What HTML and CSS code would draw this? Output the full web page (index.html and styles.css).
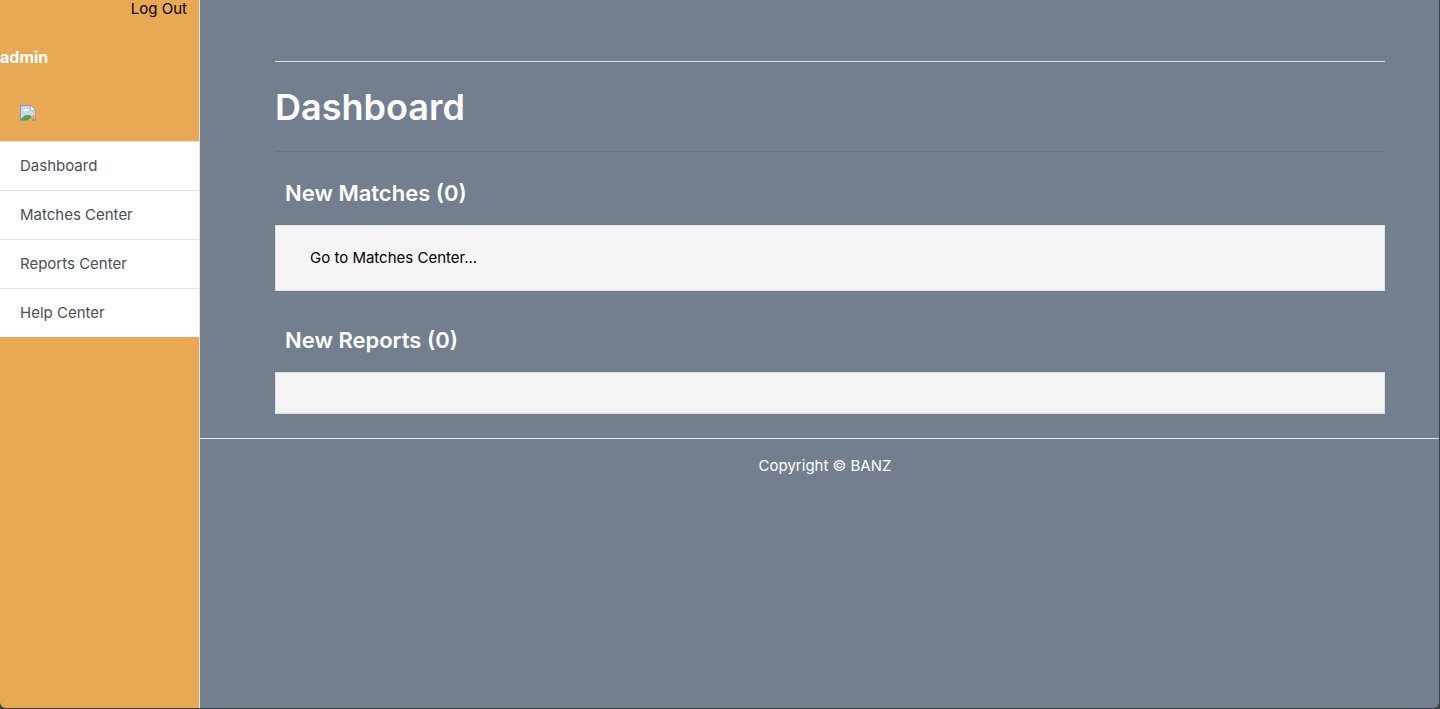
FILE: index.html
```html
<!DOCTYPE html>
<html lang="en">
<head>
<meta charset="utf-8">
<title>Dashboard</title>
<link rel="stylesheet" href="styles.css">
</head>
<body>
<div class="shell">
  <aside class="sidebar">
    <a class="logout" href="#">Log Out</a>
    <p class="user">admin</p>
    <div class="avatar">
      <svg width="16" height="16" viewBox="0 0 16 16" role="img" aria-label="Profile picture">
        <path d="M0 0h11l5 5v11H0z" fill="#96999c"/>
        <path d="M1 1h9.500v4.500H15V15H1z" fill="#c3d8f4"/>
        <path d="M11 1v4h4z" fill="#f4f4f4"/>
        <path d="M3 6c0-1 1-1.500 1.700-1.300C5.200 3 7.500 3.200 7.700 4.800 9 4.800 9 6 8.500 6z" fill="#fff"/>
        <path d="M1 15v-1C3 12 4.500 10 7.500 10s5 2 7.500 5z" fill="#58a044"/>
        <path d="M16 8v3.500L11.500 16H7z" fill="#e8a854"/>
      </svg>
    </div>
    <nav class="menu">
      <a href="#">Dashboard</a>
      <a href="#">Matches Center</a>
      <a href="#">Reports Center</a>
      <a href="#">Help Center</a>
    </nav>
  </aside>
  <div class="page">
    <main class="content">
      <h1>Dashboard</h1>
      <section>
        <h2>New Matches (0)</h2>
        <div class="panel"><a href="#">Go to Matches Center...</a></div>
      </section>
      <section>
        <h2>New Reports (0)</h2>
        <div class="panel"></div>
      </section>
    </main>
    <footer class="footer">Copyright © BANZ</footer>
  </div>
</div>
</body>
</html>
```
FILE: styles.css
```css
* {
  box-sizing: border-box;
}

body {
  margin: 0;
  background: #3d4047;
  color: #fff;
  font: 15px/24px Inter, "Liberation Sans", sans-serif;
}

a {
  color: #000;
  text-decoration: none;
}

.shell {
  display: flex;
  min-height: calc(100vh - 1px);
  margin: 0 1px 1px 0;
  overflow: hidden;
  border-radius: 0 0 6px 6px;
  background: #737f8f;
}

.sidebar {
  display: flex;
  flex-direction: column;
  flex: 0 0 200px;
  border-right: 1px solid #dee2e6;
  background: #e8a854;
}

.logout {
  align-self: flex-end;
  padding-right: 12px;
  line-height: 18px;
}

.user {
  margin: 27px 0 0;
  font-size: 16px;
  font-weight: 700;
}

.avatar {
  display: flex;
  padding: 36px 20px 20px;
}

.menu a {
  display: block;
  padding: 12px 20px;
  border-top: 1px solid #dee2e6;
  background: #fff;
  color: #495057;
}

.page {
  flex: 1;
  min-width: 0;
}

.content {
  padding: 61px 54px 24px 75px;
}

h1 {
  margin: 0;
  padding: 21px 0 20px;
  border-top: 1px solid #dee2e6;
  border-bottom: 1px solid #687383;
  font-size: 36px;
  font-weight: 600;
  line-height: 48px;
}

h2 {
  margin: 0;
  padding: 26px 10px 17px;
  font-size: 22px;
  font-weight: 600;
  line-height: 30px;
}

section + section {
  padding-top: 8px;
}

.panel {
  padding: 20px 34px;
  border: 1px solid #dee2e6;
  background: #f4f4f4;
}

.footer {
  padding: 15px 0 16px 11px;
  border-top: 1px solid #dee2e6;
  text-align: center;
}
```
